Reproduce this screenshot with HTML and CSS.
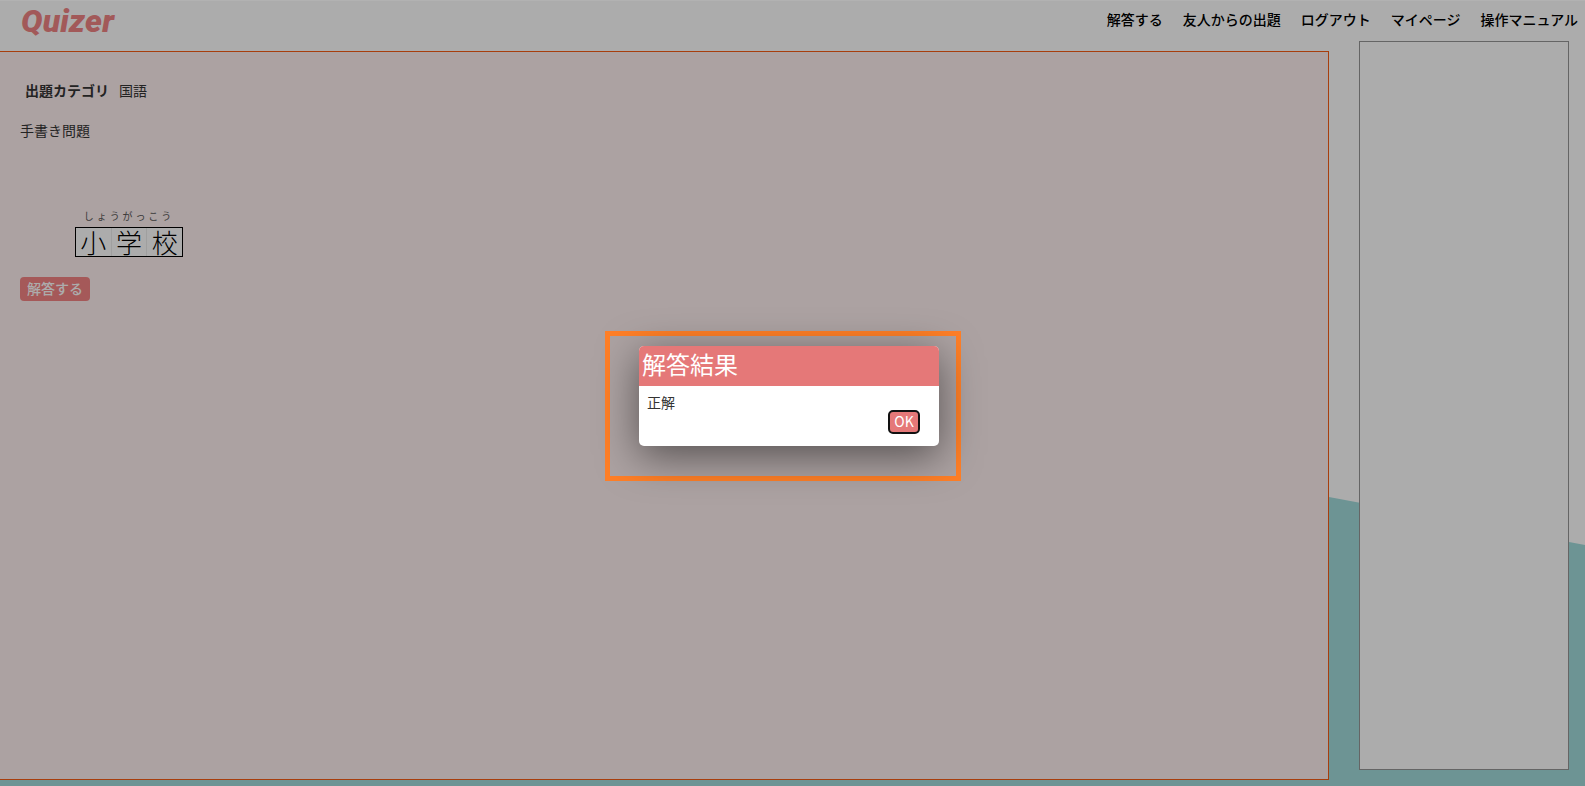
FILE: index.html
```html
<!DOCTYPE html>
<html lang="ja">
<head>
<meta charset="utf-8">
<title>Quizer</title>
<link rel="stylesheet" href="styles.css">
</head>
<body>
<div class="wave"></div>
<header class="topbar">
  <a class="logo">Quizer</a>
  <nav class="nav">
    <a>解答する</a>
    <a>友人からの出題</a>
    <a>ログアウト</a>
    <a>マイページ</a>
    <a>操作マニュアル</a>
  </nav>
</header>
<div class="layout">
  <main class="panel">
    <div class="category"><b>出題カテゴリ</b><span>国語</span></div>
    <p class="qtype">手書き問題</p>
    <div class="question">
      <div class="ruby">しょうがっこう</div>
      <div class="cells"><span>小</span><span>学</span><span>校</span></div>
    </div>
    <button class="answer">解答する</button>
  </main>
  <aside class="side"></aside>
</div>
<div class="overlay"></div>
<div class="highlight">
  <div class="modal">
    <div class="modal-head">解答結果</div>
    <div class="modal-body">
      <p>正解</p>
      <button class="ok">OK</button>
    </div>
  </div>
</div>
</body>
</html>
```
FILE: styles.css
```css
* { box-sizing: border-box; }
html, body { margin: 0; height: 100%; }
body {
  position: relative;
  width: 1585px;
  height: 786px;
  overflow: hidden;
  background: #f7f7f7;
  color: #333;
  font-family: "Noto Sans CJK JP", "Noto Sans", sans-serif;
  font-size: 14px;
}
.wave {
  position: absolute;
  inset: 0;
  background: #9cd5d5;
  clip-path: polygon(1329px 497px, 1585px 545px, 1585px 786px, 0 786px, 0 497px);
}
.topbar {
  position: relative;
  height: 41px;
  display: flex;
  justify-content: space-between;
  border-top: 1px solid #fff;
}
.logo {
  padding: 0 0 0 21px;
  font-family: Roboto, sans-serif;
  font-weight: 900;
  font-style: italic;
  font-size: 32px;
  line-height: 40px;
  letter-spacing: 0.2px;
  color: #e88080;
}
.nav {
  display: flex;
  gap: 20px;
  padding: 7px 7px 0 0;
  font-weight: 500;
  line-height: 22px;
  color: #000;
}
.layout {
  position: relative;
  display: flex;
  align-items: flex-start;
}
.panel {
  width: 1329px;
  height: 729px;
  margin-top: 10px;
  padding: 27px 0 0 20px;
  background: #f7e8e8;
  border: solid #f05a14;
  border-width: 1px 1px 1px 0;
}
.side {
  width: 210px;
  height: 729px;
  margin-left: 30px;
  background: #f7f7f7;
  border: 1px solid #919191;
}
.category {
  display: flex;
  gap: 10px;
  padding-left: 5px;
  line-height: 22px;
}
.qtype {
  margin: 18px 0 0;
  line-height: 22px;
}
.question {
  width: 108px;
  margin: 68px 0 0 55px;
}
.ruby {
  font-size: 10px;
  line-height: 14px;
  letter-spacing: 2.9px;
  text-align: center;
  white-space: nowrap;
  color: #555;
}
.cells {
  display: flex;
  height: 30px;
  margin-top: 4px;
  border: 1px solid #000;
  background: #f7f7f7;
}
.cells span {
  flex: 1;
  font-size: 26px;
  font-weight: 300;
  line-height: 28px;
  text-align: center;
  color: #000;
}
.cells span + span { border-left: 1px solid #e4e4e4; }
.answer {
  display: block;
  width: 70px;
  height: 24px;
  margin-top: 20px;
  padding: 0 0 3px;
  border: 0;
  border-radius: 4px;
  background: #ec8080;
  color: #f7f7f7;
  font: inherit;
  font-weight: 500;
}
.overlay {
  position: absolute;
  inset: 0;
  background: rgba(0, 0, 0, 0.3);
}
.highlight {
  position: absolute;
  left: 605px;
  top: 331px;
  width: 356px;
  height: 150px;
  padding: 10px 0 0 29px;
  border: 5px solid #ff7f27;
}
.modal {
  width: 300px;
  height: 100px;
  border-radius: 5px;
  overflow: hidden;
  background: #fff;
  box-shadow: 0 10px 40px rgba(0, 0, 0, 0.5);
}
.modal-head {
  height: 40px;
  padding-left: 3px;
  background: #e57878;
  color: #fff;
  font-size: 24px;
  line-height: 36px;
}
.modal-body {
  position: relative;
  height: 60px;
  padding: 6px 8px;
}
.modal-body p {
  margin: 0;
  line-height: 20px;
}
.ok {
  position: absolute;
  top: 24px;
  right: 19px;
  width: 32px;
  height: 24px;
  padding: 0 0 2px;
  border: 2px solid #111;
  border-radius: 5px;
  background: #e57878;
  color: #fff;
  font-family: inherit;
  font-size: 14px;
  line-height: 18px;
}
```
